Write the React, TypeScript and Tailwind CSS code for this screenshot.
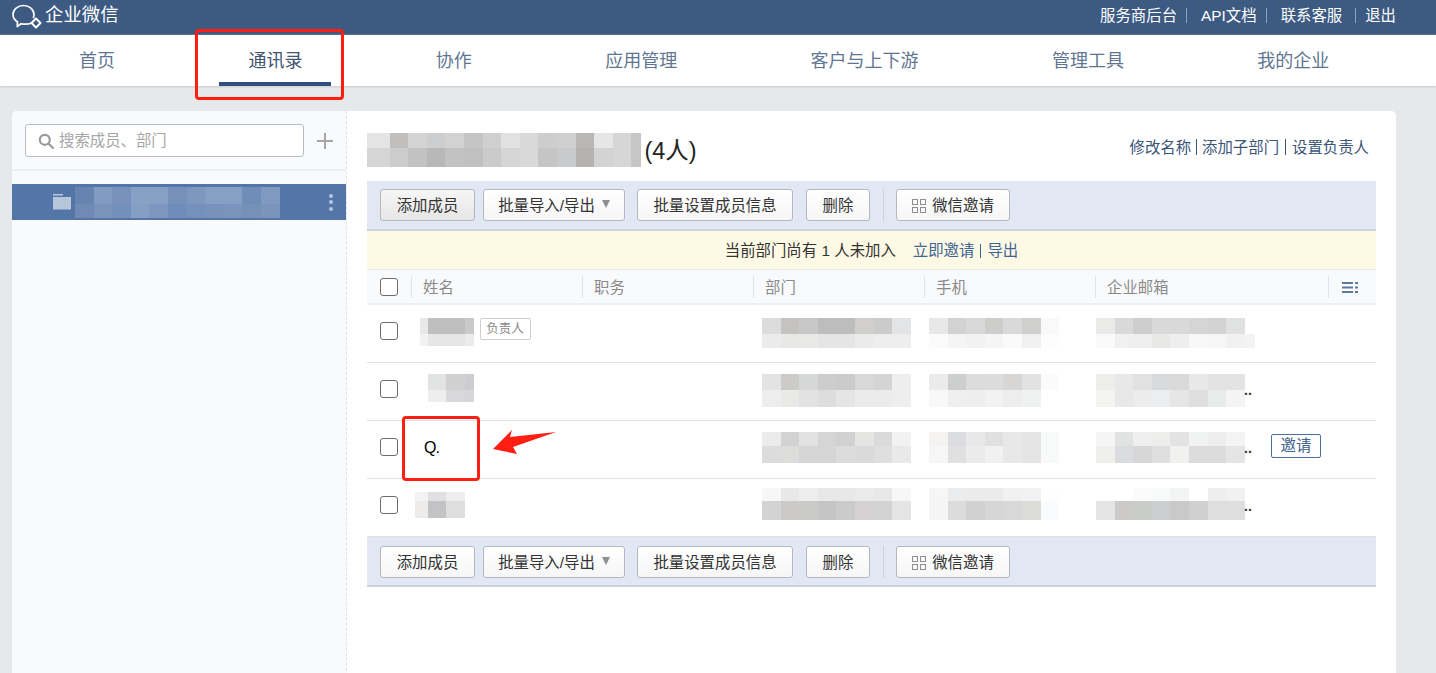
type Cell = string | null;

interface MosaicProps {
  rows: { h: number; cells: Cell[] }[];
  widths?: number[];
  top?: number;
  left?: number;
}

// Blurred-out names etc. are drawn as blocks of flat colour
function Mosaic({ rows, widths, top = 0, left = 0 }: MosaicProps) {
  return (
    <div className="shrink-0" style={{ marginTop: top, marginLeft: left }}>
      {rows.map((row, i) => (
        <div key={i} className="flex" style={{ height: row.h }}>
          {row.cells.map((c, j) => (
            <div
              key={j}
              style={{
                width: widths?.[j] ?? 18.6,
                background: c ?? 'transparent',
              }}
            />
          ))}
        </div>
      ))}
    </div>
  );
}

const titleWidths = [22.7, 18.6, 18.6, 18.6, 18.6, 18.6, 18.6, 18.6, 18.6, 18.6, 18.6, 18.6, 18.6, 18.6, 10];

const titleMosaic = [
  { h: 15, cells: ['#e4e4e4', '#c0bfbd', '#d4d4d4', '#cdced0', '#d2d2d2', '#c5c5c5', '#cfcfcf', '#e1e1e1', '#d9d9d9', '#cdcdcd', '#cfcfcf', '#b8b7b5', '#e6e6e6', '#d6d6d6', '#c6c6c6'] },
  { h: 19, cells: ['#d5d5d5', '#cccccc', '#c2c2c2', '#b8b8b8', '#c2c2c2', '#c0c0c0', '#cbcbcb', '#d5d5d5', '#d9d9d9', '#c5c5c5', '#c9cacb', '#b4b3b1', '#d3d3d3', '#d6d6d6', '#c6c6c6'] },
];

const sideMosaic = [
  { h: 17, cells: ['#6783b0', '#819bc2', '#7892bb', '#87a0c5', '#87a0c5', '#7591ba', '#7d97bf', '#86a0c5', '#86a0c5', '#708db8', '#7f99c0'] },
  { h: 14, cells: ['#6e8ab5', '#7894bc', '#7390ba', '#83a0c4', '#7c97bf', '#6f8db8', '#7391bb', '#7892bb', '#7a95bd', '#7591ba', '#7a95bd'] },
];

const members = [
  {
    name: { left: 9, top: 13, widths: [7.5, 18.5, 18.5, 9], rows: [
      { h: 16, cells: ['#e8e8e8', '#bfbfbf', '#bfbfbf', '#c9c9c9'] },
      { h: 12, cells: ['#f2f2f2', '#e6e6e6', '#e6e6e6', '#ebebeb'] },
    ] },
    dept: { top: 13, rows: [
      { h: 16, cells: ['#dcdcdc', '#c4c3c1', '#c7c8c7', '#bdbdbd', '#bdbdbd', '#d0cfcc', '#cbcbcc', '#e3e4e5'] },
      { h: 14, cells: ['#ebebeb', '#e8e8e7', '#e9e9e8', '#e5e5e5', '#e5e5e5', '#ebebeb', '#eeeeee', '#eeeeee'] },
    ] },
    phone: { top: 13, rows: [
      { h: 16, cells: ['#e8e8e8', '#d2d2d3', '#d9d9d9', '#cdcdcb', '#d9d9da', '#cfcfce', '#f9f9fa'] },
      { h: 14, cells: ['#fbfbfb', '#f5f5f5', '#f2f2f2', '#f5f5f5', '#fafafa', '#f0f0f0', '#fdfdfd'] },
    ] },
    email: { top: 13, widths: [18.6, 18.6, 18.6, 18.6, 18.6, 18.6, 18.6, 18.6, 10], rows: [
      { h: 16, cells: ['#eaeae8', '#d9d9d9', '#cecece', '#d9d9d9', '#d9d9d9', '#d5d5d5', '#d3d3d3', '#e0e1e1'] },
      { h: 14, cells: ['#f9f9f9', '#f0f0f0', '#efefef', '#e8e8e7', '#eeeeee', '#f8f8f8', '#f6f6f6', '#f1f1f1', '#f3f3f3'] },
    ] },
  },
  {
    name: { left: 16.5, top: 11, widths: [18.5, 18.5, 9], rows: [
      { h: 16, cells: ['#e2e3e3', '#d0d0d1', '#cdcdcf'] },
      { h: 12, cells: ['#eeeeee', '#d8d8da', '#d6d6d8'] },
    ] },
    dept: { top: 11, rows: [
      { h: 16, cells: ['#e3e3e3', '#cdcbc8', '#d6d7d7', '#cdcdcd', '#cbcbcb', '#d9d8d8', '#d4d4d4', '#eeeeee'] },
      { h: 17, cells: ['#ededed', '#e9e9e7', '#e2e2e2', '#dddddd', '#e5e5e5', '#ebebeb', '#ebebeb', '#eeeeee'] },
    ] },
    phone: { top: 11, rows: [
      { h: 16, cells: ['#ebebeb', '#cdcfce', '#dbdbdb', '#dcdcdc', '#d7d6d5', '#e2e2e2', '#fbfbfb'] },
      { h: 17, cells: ['#f8f8f8', '#efefef', '#eeeeee', '#f2f2f2', '#ededed', '#f0f1f1', null] },
    ] },
    email: { top: 11, dots: true, rows: [
      { h: 16, cells: ['#ededec', '#e8e8e8', '#e1e1e1', '#d9dadc', '#dadada', '#e8e8e8', '#e3e3e3', '#e3e3e3'] },
      { h: 17, cells: ['#f3f3f2', '#e8e8e8', '#ececec', '#ecedef', '#e6e6e6', '#dfdfdf', '#e9eaea', '#f4f4f4'] },
    ] },
  },
  {
    dept: { top: 11, rows: [
      { h: 14, cells: ['#ebebeb', '#d2d2d2', '#e2e2e2', '#d5d5d5', '#d1d1d1', '#e5e5e3', '#dadada', '#f2f2f2'] },
      { h: 17, cells: ['#dcdcdc', '#dddedb', '#d5d5d5', '#d5d5d5', '#dcdcdc', '#dadada', '#dfdfdf', '#e9e9e9'] },
    ] },
    phone: { top: 11, rows: [
      { h: 14, cells: ['#f4f3f1', '#dcdde0', '#e8e8e8', '#e0e0e0', '#e8e8e8', '#e5e5e5', '#f8f9f9'] },
      { h: 17, cells: ['#f6f6f6', '#e0e0e0', '#ebebeb', '#f1f1f1', '#e8e8e8', '#e5e5e5', '#f8f9f9'] },
    ] },
    email: { top: 11, dots: true, rows: [
      { h: 14, cells: ['#f5f5f5', '#e1e3e3', '#efefef', '#ededec', '#e3e3e4', '#f1f2f2', '#eeeeee', '#f4f4f4'] },
      { h: 17, cells: ['#efefed', '#dadcdf', '#d7d7d7', '#dfdfdf', '#f1f1f0', '#dcdcdc', '#dcdcdc', '#e5e5e5'] },
    ] },
  },
  {
    name: { left: 4, top: 13, widths: [12.5, 18.5, 18.5], rows: [
      { h: 9, cells: ['#f3f3f3', '#dfe0e2', '#edeeee'] },
      { h: 17, cells: ['#eeecea', '#c3c3c5', '#dddedd'] },
    ] },
    dept: { top: 9, rows: [
      { h: 13, cells: ['#f7f7f7', '#e8e8e8', '#eeeeee', '#e8e8e8', '#e8e8e8', '#eaeaea', '#e8e8e8', '#f7f7f7'] },
      { h: 19, cells: ['#d3d3d3', '#cbcac8', '#cacac8', '#c5c5c5', '#cbcbcb', '#d4d2d3', '#d3d3d4', '#e3e4e3'] },
    ] },
    phone: { top: 9, rows: [
      { h: 13, cells: ['#f6f6f6', '#ebeced', '#ebebeb', '#ebebeb', '#f1f1f1', '#f2f2f2', '#fefefe'] },
      { h: 19, cells: ['#f5f5f5', '#dcdcdc', '#d1d1d1', '#d6d6d6', '#d8d8d8', '#dcdcd9', '#fafbfd'] },
    ] },
    email: { top: 9, dots: true, rows: [
      { h: 13, cells: [null, null, '#fbfbfb', '#f9fafa', '#f3f4f4', null, '#eeeeee', '#f1f1f1'] },
      { h: 19, cells: ['#e5e5e5', '#cbcac8', '#caccca', '#cdced0', '#c9c9c9', '#d0d0d0', '#dedede', '#dedede'] },
    ] },
  },
];

function QrIcon() {
  return (
    <svg width="14" height="14" viewBox="0 0 14 14" fill="none" stroke="#8f8f8f" strokeWidth="1">
      <rect x="0.5" y="0.5" width="5" height="5" />
      <rect x="8.500" y="0.5" width="5" height="5" />
      <rect x="0.5" y="8.500" width="5" height="5" />
      <rect x="8.500" y="8.500" width="5" height="5" />
    </svg>
  );
}

function Btn({ className, children }: { className: string; children: React.ReactNode }) {
  return (
    <div className={`h-8 pt-[1px] flex items-center justify-center shrink-0 rounded-[3px] border border-[#b4b8bf] text-[15.400px] text-[#333] ${className}`}>
      {children}
    </div>
  );
}

function Toolbar({ pressed, className }: { pressed?: boolean; className: string }) {
  return (
    <div className={`h-[50px] bg-[#e1e8f3] flex items-center pl-[13px] border-b-2 border-[#ccd3dd] ${className}`}>
      <Btn className={`w-[95px] ${pressed ? 'bg-gradient-to-b from-[#f6f6f6] to-[#e6e6e6]' : 'bg-gradient-to-b from-white to-[#f6f6f6]'}`}>添加成员</Btn>
      <Btn className="w-[142px] ml-2 gap-[7px] bg-gradient-to-b from-white to-[#f6f6f6]">
        批量导入/导出
        <span className="w-0 h-0 border-x-4 border-x-transparent border-t-[8px] border-t-[#8e8e8e] mb-[3px]" />
      </Btn>
      <Btn className="w-[156px] ml-3 bg-gradient-to-b from-white to-[#f6f6f6]">批量设置成员信息</Btn>
      <Btn className="w-16 ml-[13px] bg-gradient-to-b from-white to-[#f6f6f6]">删除</Btn>
      <div className="w-px h-8 bg-[#cbd2dc] ml-[13px]" />
      <Btn className="w-[114px] ml-[12px] gap-[6px] bg-gradient-to-b from-white to-[#f6f6f6]">
        <QrIcon />
        微信邀请
      </Btn>
    </div>
  );
}

function Checkbox() {
  return <div className="w-[18px] h-[18px] rounded-[3px] border border-[#6d6d6d] bg-white" />;
}

const navItems = ['首页', '通讯录', '协作', '应用管理', '客户与上下游', '管理工具', '我的企业'];
const headCols = ['姓名', '职务', '部门', '手机', '企业邮箱'];

export default function App() {
  return (
    <div className="relative w-[1436px] h-[673px] overflow-hidden bg-[#e7e8ea] font-['Liberation_Sans','Noto_Sans_CJK_SC',sans-serif]">
      {/* top bar */}
      <div className="h-[35px] bg-[#3c5a82] border-b border-[#5b7496] flex items-center pl-3 text-white">
        <svg width="30" height="28" viewBox="0 0 30 28" fill="none" stroke="white" strokeWidth="1.700" className="-mt-[1px] shrink-0">
          <path d="M19 20.200C17 21 15 21.200 13 21.200C11.500 21.200 10.200 21 9 20.700L5.200 23.500L5.500 19C2.800 17.200 1 14.500 1 11.500C1 6.300 5.800 2.500 11.500 2.500C17.200 2.500 22 6.300 22 11.500C22 12.500 21.800 13.500 21.500 14.400" strokeLinecap="round" strokeLinejoin="round" />
          <path d="M24 15.500L28.500 20L24 24.500L19.500 20Z" strokeLinejoin="round" strokeWidth="2" />
        </svg>
        <span className="ml-[3px] mb-[4px] text-[18.400px] leading-none">企业微信</span>
        <div className="ml-auto mb-[3px] flex items-center text-[15.400px] pr-10">
          <span>服务商后台</span>
          <span className="w-px h-[15px] bg-[#8fa3bd] ml-[9px]" />
          <span className="ml-[14px]">API文档</span>
          <span className="w-px h-[15px] bg-[#8fa3bd] ml-[9px]" />
          <span className="ml-[14px]">联系客服</span>
          <span className="w-px h-[15px] bg-[#8fa3bd] ml-[13px]" />
          <span className="ml-[9px]">退出</span>
        </div>
      </div>

      {/* nav */}
      <div className="h-[51px] pt-[2px] bg-white shadow-[0_1px_2px_rgba(0,0,0,0.12)] flex items-center pl-[79px] gap-[133.4px] text-[18px]">
        {navItems.map((item, i) => (
          <div key={item} className={`relative shrink-0 ${i === 1 ? 'text-[#3f5470]' : 'text-[#5f7693]'}`}>
            {item}
            {i === 1 && <div className="absolute -left-[29px] -right-[29px] top-[34px] h-1 bg-[#32507f]" />}
          </div>
        ))}
      </div>

      {/* card */}
      <div className="mt-[25px] ml-3 w-[1384px] h-[600px] bg-white rounded-t-[5px] flex overflow-hidden">
        {/* sidebar */}
        <div className="w-[335px] shrink-0 bg-[#f9fafb] border-r border-dashed border-[#dfe3e8]">
          <div className="h-[60px] pt-[13px] pl-[13px] flex border-b-2 border-[#eeeff1]">
            <div className="w-[279px] h-[33px] pt-[1px] bg-white rounded-[3px] border border-[#b7bcc4] flex items-center pl-3 text-[15.400px] text-[#a6a6a6]">
              <svg width="16" height="16" viewBox="0 0 16 16" fill="none" stroke="#9a9a9a" strokeWidth="2.200" className="mr-[5px]">
                <circle cx="6.800" cy="6.800" r="5" />
                <path d="M10.500 10.500L15 15" strokeLinecap="round" />
              </svg>
              搜索成员、部门
            </div>
            <div className="ml-[13px] mt-[9px] relative w-4 h-4">
              <div className="absolute left-0 right-0 top-[7px] h-[2px] bg-[#a6a6a6]" />
              <div className="absolute top-0 bottom-0 left-[7px] w-[2px] bg-[#a6a6a6]" />
            </div>
          </div>
          <div className="mt-[13px] h-9 bg-[#5475a8] flex items-center">
            <svg width="18" height="16" viewBox="0 0 18 16" className="ml-[41px] shrink-0">
              <path d="M0 0H10V1.500H0Z M0 3H18V15.500H0Z" fill="#b7c6db" />
            </svg>
            <div className="ml-[4px]">
              <Mosaic rows={sideMosaic} />
            </div>
            <div className="ml-[49px] flex flex-col gap-[2.500px]">
              <div className="w-1 h-1 rounded-full bg-[#b7c6db]" />
              <div className="w-1 h-1 rounded-full bg-[#b7c6db]" />
              <div className="w-1 h-1 rounded-full bg-[#b7c6db]" />
            </div>
          </div>
        </div>

        {/* main */}
        <div className="w-[1009px] ml-5 shrink-0">
          <div className="h-[70px] pt-[22px] flex">
            <Mosaic rows={titleMosaic} widths={titleWidths} />
            <span className="ml-[3px] text-[23.500px] leading-[36px] text-[#222]">(4人)</span>
            <div className="ml-auto mr-[7px] mt-[3px] flex items-start text-[15.400px] leading-[24px] text-[#3b5578]">
              <span>修改名称</span>
              <span className="w-px h-4 bg-[#3b5578] mx-[5px] mt-[3px]" />
              <span>添加子部门</span>
              <span className="w-px h-4 bg-[#3b5578] ml-[6px] mr-[6px] mt-[3px]" />
              <span>设置负责人</span>
            </div>
          </div>

          <Toolbar pressed className="" />

          <div className="h-[38px] pt-[1px] bg-[#fef9e5] flex items-center justify-center text-[15.400px] text-[#333]">
            <span>当前部门尚有 1 人未加入</span>
            <span className="ml-[17px] text-[#3f6596]">立即邀请</span>
            <span className="w-px h-[14px] bg-[#3f6596] mx-[6px]" />
            <span className="text-[#3f6596]">导出</span>
          </div>

          <div className="h-[36px] pt-[1px] bg-[#f9fafc] border-t border-[#e5e8ed] border-b-2 border-b-[#eef0f3] grid grid-cols-[44px_171px_171px_171px_171px_233px_48px] items-center text-[15.400px] text-[#8a8a8a]">
            <div className="pl-[13px]">
              <Checkbox />
            </div>
            {headCols.map((c) => (
              <div key={c} className="h-[22px] border-l border-[#dfe2e6] pl-[11px] leading-[24px]">
                {c}
              </div>
            ))}
            <div className="h-[22px] border-l border-[#dfe2e6] pl-[13px] flex items-center">
              <svg width="17" height="13" viewBox="0 0 17 13" fill="#5e78a0">
                <rect x="0" y="1" width="11" height="2" />
                <rect x="0" y="5.500" width="11" height="2" />
                <rect x="0" y="10" width="11" height="2" />
                <rect x="13" y="1" width="3" height="2" />
                <rect x="13" y="5.500" width="3" height="2" />
                <rect x="13" y="10" width="3" height="2" />
              </svg>
            </div>
          </div>

          {members.map((m, i) => (
            <div key={i} className="h-[58px] border-b border-[#e2e2e2] grid grid-cols-[44px_171px_171px_171px_171px_233px_48px] last:border-b-0">
              <div className="pl-[13px] pt-[17px]">
                <Checkbox />
              </div>
              <div className="flex items-start">
                {m.name ? (
                  <Mosaic rows={m.name.rows} top={m.name.top} left={m.name.left} widths={m.name.widths} />
                ) : (
                  <span className="ml-[13px] mt-[15px] text-[16px] tracking-[-1px] text-black">Q.</span>
                )}
                {i === 0 && (
                  <span className="ml-[6px] mt-[13px] w-[51px] h-[22px] rounded-[2px] border border-[#cfcfcf] text-[12.500px] leading-[20px] text-center text-[#8a8a8a]">
                    负责人
                  </span>
                )}
              </div>
              <div />
              <div className="pl-[9px] flex items-start">
                <Mosaic rows={m.dept.rows} top={m.dept.top} />
              </div>
              <div className="pl-[5px] flex items-start">
                <Mosaic rows={m.phone.rows} top={m.phone.top} />
              </div>
              <div className="pl-[1px] flex items-start relative">
                <Mosaic rows={m.email.rows} top={m.email.top} widths={m.email.widths} />
                {m.email.dots && <span className="absolute left-[149px] top-[17px] text-[14px] font-bold text-[#333]">..</span>}
                {i === 2 && (
                  <span className="absolute left-[176px] top-[13px] w-[50px] h-6 rounded-[2px] border border-[#4a6fa5] text-[15.400px] leading-[22px] text-center text-[#3e5f8a]">
                    邀请
                  </span>
                )}
              </div>
              <div />
            </div>
          ))}

          <Toolbar className="pt-[2px]" />
        </div>
      </div>

      {/* red annotations */}
      <div className="absolute left-[195px] top-[29px] w-[149px] h-[71px] border-[3.500px] border-[#ff1e12] rounded-[4px]" />
      <div className="absolute left-[402px] top-[416px] w-[78px] h-[65px] border-[3.500px] border-[#ff1e12] rounded-[4px]" />
      <svg className="absolute left-[490px] top-[428px]" width="70" height="30" viewBox="0 0 70 30">
        <path d="M3 21L22 2L20 9L66 4L23 19L27 26Z" fill="#ff1e12" />
      </svg>
    </div>
  );
}
